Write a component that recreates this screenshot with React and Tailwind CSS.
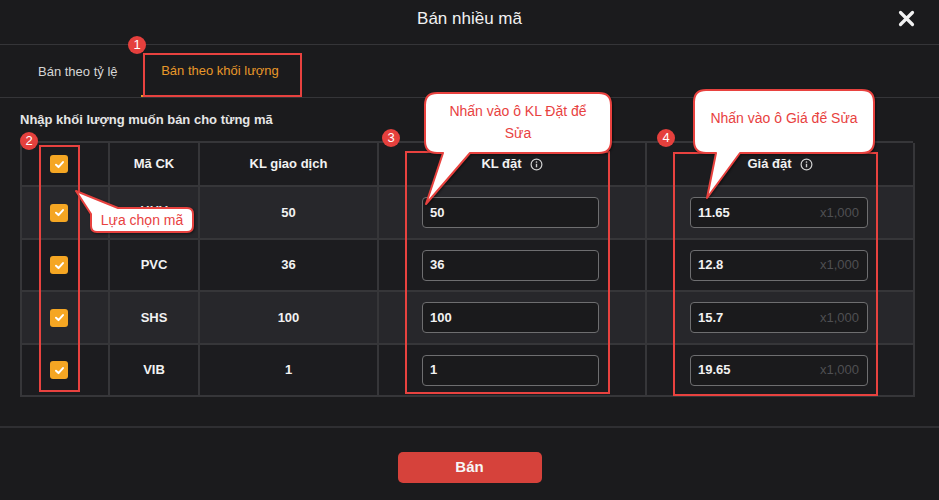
import React from "react";

const rows = [
  { code: "HHV", kl: "50", dat: "50", gia: "11.65", bg: "bg-[#27272b]" },
  { code: "PVC", kl: "36", dat: "36", gia: "12.8", bg: "bg-[#1c1c1f]" },
  { code: "SHS", kl: "100", dat: "100", gia: "15.7", bg: "bg-[#27272b]" },
  { code: "VIB", kl: "1", dat: "1", gia: "19.65", bg: "bg-[#1c1c1f]" },
];
const rowH = ["h-[53px]", "h-[52px]", "h-[53px]", "h-[52px]"];

function Check() {
  return (
    <div className="w-[18px] h-[18px] rounded-[3px] bg-[#f5a623] flex items-center justify-center">
      <svg width="11" height="11" viewBox="0 0 12 12" fill="none">
        <path d="M2.2 6.3 L4.9 8.8 L9.8 3.4" stroke="white" strokeWidth="2.2" strokeLinecap="round" strokeLinejoin="round" />
      </svg>
    </div>
  );
}

function InfoIcon() {
  return (
    <svg width="13" height="13" viewBox="0 0 14 14" fill="none" className="ml-[8px]">
      <circle cx="7" cy="7" r="5.8" stroke="#cfcfcf" strokeWidth="1.3" />
      <line x1="7" y1="6.2" x2="7" y2="10" stroke="#cfcfcf" strokeWidth="1.5" />
      <circle cx="7" cy="4.3" r="0.9" fill="#cfcfcf" />
    </svg>
  );
}

function Badge({ n, x, y }) {
  return (
    <div
      className="absolute w-[18px] h-[18px] rounded-full bg-[#e5403d] text-white text-[13px] leading-[18px] text-center"
      style={{ left: x - 9, top: y - 9 }}
    >
      {n}
    </div>
  );
}

function Box({ x, y, w, h }) {
  return (
    <div
      className="absolute border-2 border-[#e8423f]"
      style={{ left: x, top: y, width: w, height: h }}
    />
  );
}

const cell = "border-r-2 border-b-2 border-[#363639] flex items-center";

export default function App() {
  return (
    <div
      className="relative w-[939px] h-[500px] overflow-hidden bg-[#1b1b1d] text-white"
      style={{ fontFamily: '"Liberation Sans", Arial, sans-serif' }}
    >
      {/* Header */}
      <div className="h-[45px] border-b border-[#353538] flex items-center pb-[7px]">
        <div className="w-[60px]" />
        <div className="flex-1 text-center text-[17px] text-[#f2f2f2]">Bán nhiều mã</div>
        <div className="w-[60px] flex justify-end pr-[24px]">
          <svg width="17" height="17" viewBox="0 0 17 17">
            <path d="M2.5 2.5 L14.5 14.5 M14.5 2.5 L2.5 14.5" stroke="#f2f2f2" strokeWidth="3.2" strokeLinecap="round" />
          </svg>
        </div>
      </div>

      {/* Tabs */}
      <div className="h-[53px] border-b border-[#353538] flex items-stretch pl-[21px]">
        <div className="px-[17px] pt-[2px] flex items-center text-[13px] text-[#d6d6d6]">Bán theo tỷ lệ</div>
        <div className="ml-[6px] w-[159px] pt-[2px] flex items-center justify-center text-[13px] text-[#e8982a] border-b-2 border-[#e8982a]">
          Bán theo khối lượng
        </div>
      </div>

      {/* Label */}
      <div className="mt-[14px] ml-[20px] text-[13px] leading-[15px] font-bold text-[#e6e6e6]">
        Nhập khối lượng muốn bán cho từng mã
      </div>

      {/* Table */}
      <div className="mt-[14px] ml-[20px] w-[893px] border-t-2 border-l-2 border-[#363639] grid grid-cols-[88px_90px_179px_268px_268px] text-[13px] font-bold text-[#f2f2f2]">
        <div className={`${cell} h-[44px] pl-[28px] bg-[#1c1c1f]`}><Check /></div>
        <div className={`${cell} h-[44px] justify-center bg-[#1c1c1f]`}>Mã CK</div>
        <div className={`${cell} h-[44px] justify-center bg-[#1c1c1f]`}>KL giao dịch</div>
        <div className={`${cell} h-[44px] justify-center bg-[#1c1c1f]`}>KL đặt<InfoIcon /></div>
        <div className={`${cell} h-[44px] justify-center bg-[#1c1c1f]`}>Giá đặt<InfoIcon /></div>
        {rows.map((r, i) => (
          <React.Fragment key={r.code}>
            <div className={`${cell} ${rowH[i]} ${r.bg} pl-[28px]`}><Check /></div>
            <div className={`${cell} ${rowH[i]} ${r.bg} justify-center ${i === 0 ? "pb-[3px]" : ""}`}>{r.code}</div>
            <div className={`${cell} ${rowH[i]} ${r.bg} justify-center`}>{r.kl}</div>
            <div className={`${cell} ${rowH[i]} ${r.bg} pl-[43px]`}>
              <div className="w-[177px] h-[31px] rounded-[4px] border-[1.5px] border-[#6e6e70] bg-[#1a1a1c] flex items-center pl-[7px]">
                {r.dat}
              </div>
            </div>
            <div className={`${cell} ${rowH[i]} ${r.bg} pl-[43px]`}>
              <div className="w-[178px] h-[31px] rounded-[4px] border-[1.5px] border-[#6e6e70] bg-[#1a1a1c] flex items-center justify-between pl-[7px] pr-[8px]">
                <span>{r.gia}</span>
                <span className="font-normal text-[#4f4f52]">x1,000</span>
              </div>
            </div>
          </React.Fragment>
        ))}
      </div>

      {/* Footer */}
      <div className="mt-[29px] border-t-2 border-[#2f2f32] flex justify-center pt-[24px]">
        <div className="w-[144px] h-[31px] rounded-[5px] bg-[#d6423b] flex items-center justify-center text-[15px] font-bold text-[#f6f6f6]">
          Bán
        </div>
      </div>

      {/* Annotations */}
      <Box x={143} y={53} w={159} h={44} />
      <Box x={39} y={145} w={41} h={247} />
      <Box x={405} y={151} w={205} h={243} />
      <Box x={673} y={152} w={205} h={244} />

      <svg className="absolute left-0 top-0 pointer-events-none" width="939" height="500" style={{ filter: "drop-shadow(1px 1px 1px rgba(0,0,0,0.45))" }}>
        <path
          d="M76 191 L118 208 L187 208 Q193 208 193 214 L193 226 Q193 232 187 232 L97 232 Q91 232 91 226 L91 214 Z"
          fill="white" stroke="#e8423f" strokeWidth="2" strokeLinejoin="round"
        />
        <path
          d="M438 93 L599 93 Q611 93 611 105 L611 141 Q611 153 599 153 L470 153 L426 204 L443 153 L437 153 Q425 153 425 141 L425 105 Q425 93 437 93 Z"
          fill="white" stroke="#e8423f" strokeWidth="2" strokeLinejoin="round"
        />
        <path
          d="M706 90 L862 90 Q874 90 874 102 L874 141 Q874 153 862 153 L740 153 L707 198 L716 153 L706 153 Q694 153 694 141 L694 102 Q694 90 706 90 Z"
          fill="white" stroke="#e8423f" strokeWidth="2" strokeLinejoin="round"
        />
      </svg>

      <div className="absolute left-[91px] top-[208px] w-[102px] h-[24px] flex items-center justify-center text-[14px] text-[#e8423f]">
        Lựa chọn mã
      </div>
      <div className="absolute left-[425px] top-[100px] w-[186px] text-center text-[14px] leading-[22px] text-[#e8423f]">
        Nhấn vào ô KL Đặt để
        <br />
        Sửa
      </div>
      <div className="absolute left-[694px] top-[90px] w-[180px] h-[56px] flex items-center justify-center text-[14px] text-[#e8423f]">
        Nhấn vào ô Giá để Sửa
      </div>

      <Badge n="1" x={137} y={45} />
      <Badge n="2" x={29} y={141} />
      <Badge n="3" x={391} y={138} />
      <Badge n="4" x={666} y={138} />
    </div>
  );
}
